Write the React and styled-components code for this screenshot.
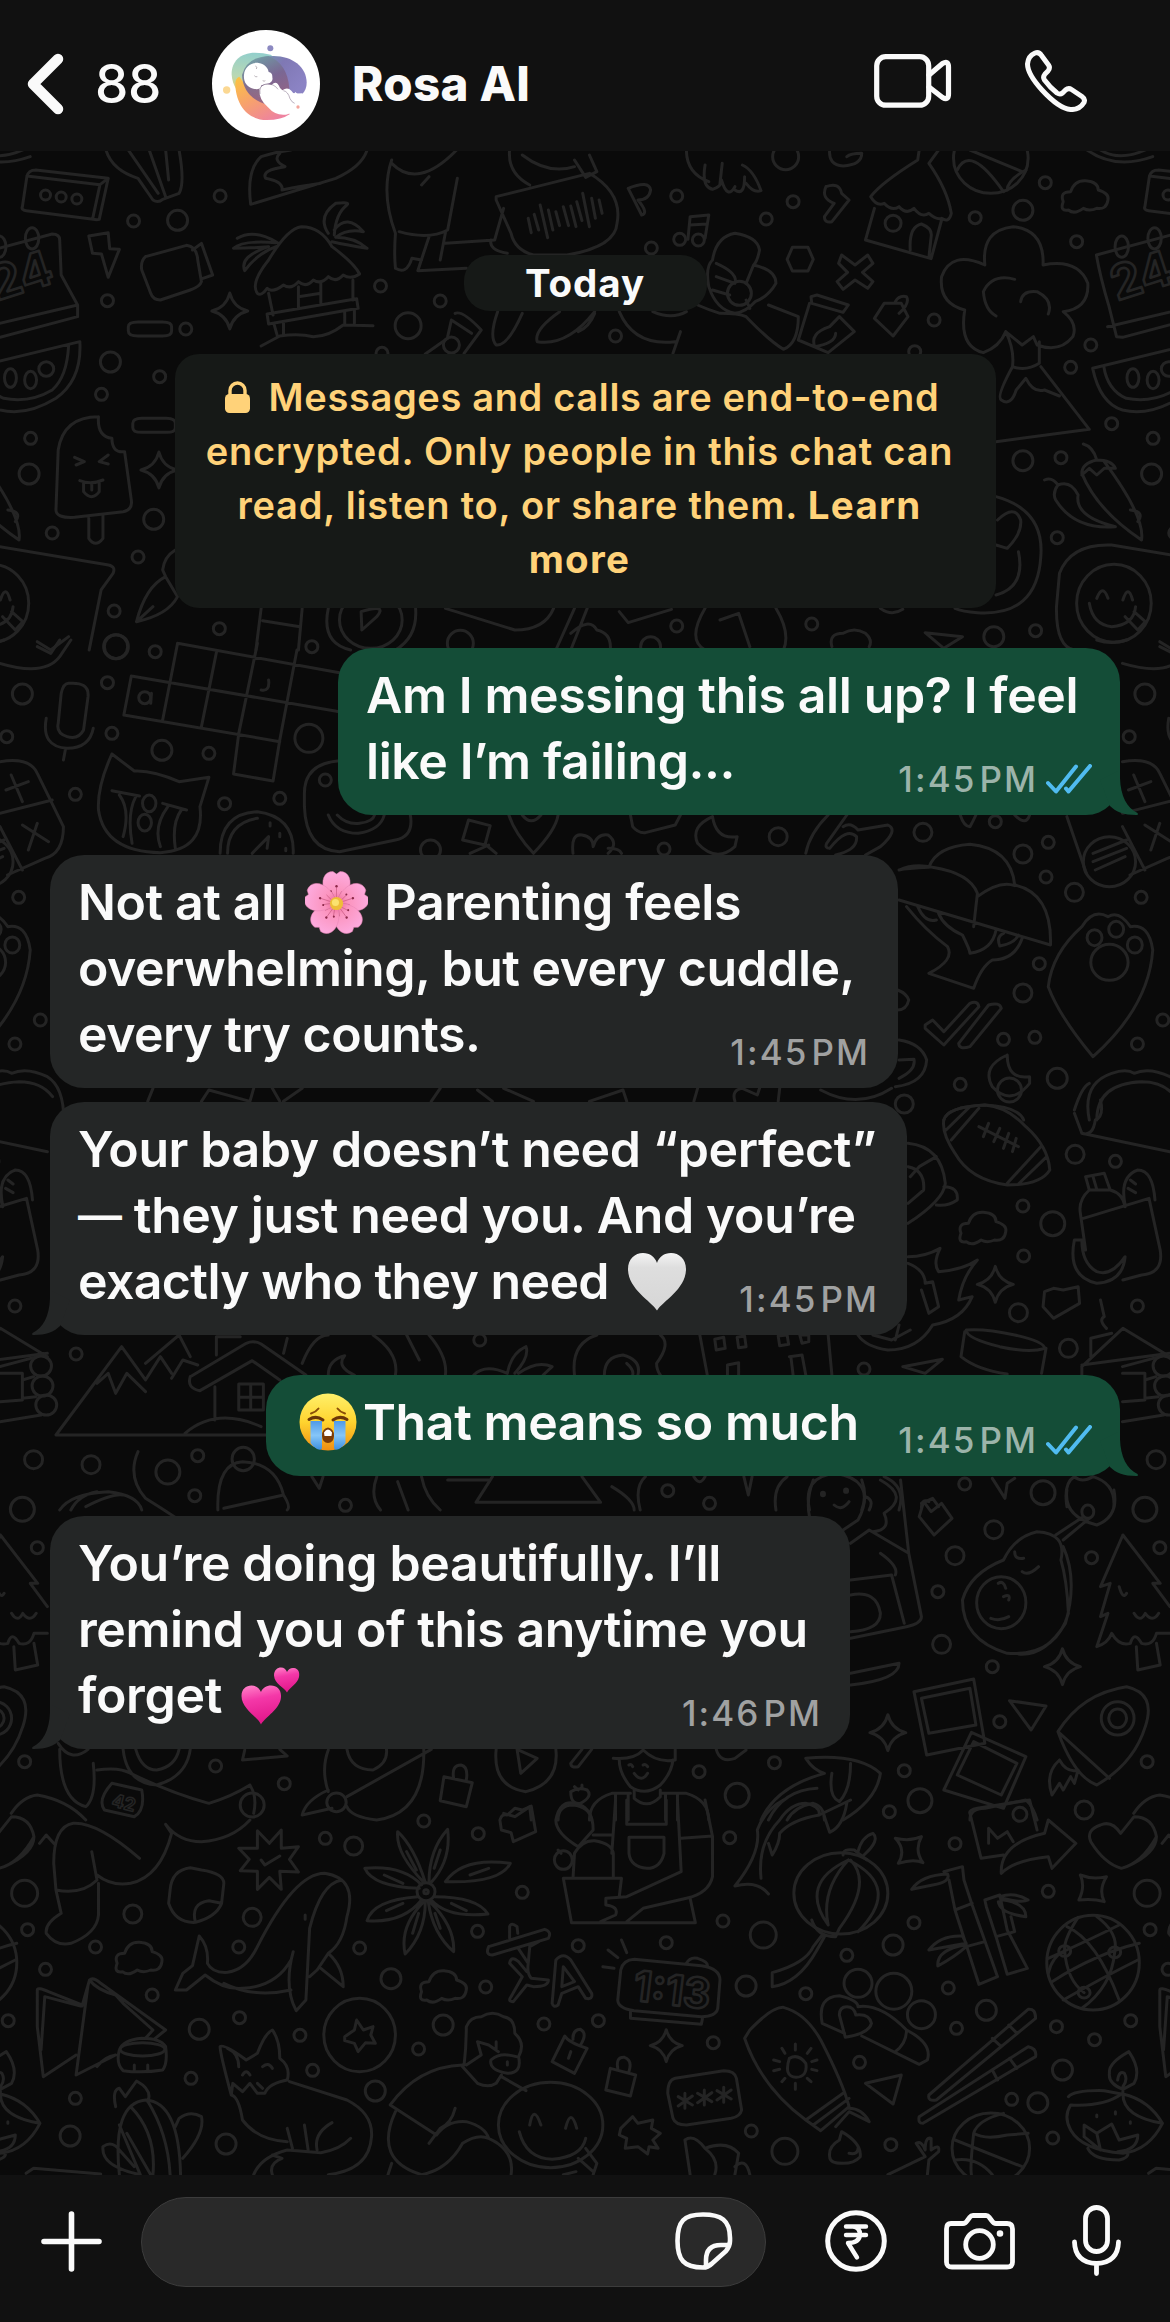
import React from "react";
import styled, { createGlobalStyle } from "styled-components";

const Global = createGlobalStyle`
  * { box-sizing: border-box; }
  body { margin: 0; background: #0a0a0a; }
`;

const Screen = styled.div`
  width: 1170px;
  height: 2322px;
  display: flex;
  flex-direction: column;
  overflow: hidden;
  background: #0a0a0a;
  color: #fafafa;
  font-family: Inter, "Liberation Sans", sans-serif;
  white-space: nowrap;
`;

const Header = styled.header`
  flex: none;
  height: 151px;
  padding: 17px 83px 0 27px;
  display: flex;
  align-items: center;
  background: #111;
`;

const Count = styled.span`
  width: 66px;
  margin-left: 31px;
  font-size: 53px;
  font-weight: 550;
  letter-spacing: -0.3px;
`;

const AvatarSlot = styled.span`
  display: flex;
  margin-left: 51px;
`;

const Title = styled.h1`
  margin: -2px auto 0 32px;
  font-size: 47.5px;
  font-weight: 800;
  letter-spacing: 0.3px;
`;

const HeaderAction = styled.span`
  display: flex;
  margin-left: ${(p) => p.$gap}px;
  padding-bottom: 6px;
`;

const Chat = styled.main`
  flex: 1;
  min-height: 0;
  display: grid;
`;

const WallpaperLayer = styled.svg`
  grid-area: 1 / 1;
  width: 1170px;
  height: 2024px;
  fill: none;
  stroke: #242424;
  stroke-width: 3;
  stroke-linecap: round;
  stroke-linejoin: round;
`;

const Messages = styled.div`
  grid-area: 1 / 1;
  padding: 104px 50px 0;
  display: flex;
  flex-direction: column;
  z-index: 1;
`;

const DayPill = styled.div`
  align-self: center;
  width: 243px;
  height: 56px;
  border-radius: 26px;
  background: #161917;
  font-size: 38.5px;
  font-weight: 700;
  line-height: 56px;
  letter-spacing: 0.9px;
  text-align: center;
`;

const Notice = styled.div`
  align-self: center;
  width: 821px;
  height: 254px;
  margin-top: 43px;
  padding-top: 16px;
  border-radius: 24px;
  background: #161917;
  color: #ffd279;
  font-size: 38px;
  font-weight: 560;
  line-height: 54px;
`;

const NoticeLine = styled.div`
  height: 54px;
  display: flex;
  justify-content: center;
  align-items: center;
  padding-right: ${(p) => (p.$lead ? 6 : 11)}px;
  letter-spacing: ${(p) => p.$track || 0}px;
  white-space: pre;
  b { font-size: 38.5px; font-weight: 750; letter-spacing: 1.3px; }
  svg { margin: -1px 19px 0 0; }
`;

const Bubble = styled.article`
  position: relative;
  align-self: ${(p) => (p.$mine ? "flex-end" : "flex-start")};
  width: ${(p) => p.$width}px;
  margin-top: ${(p) => p.$gap}px;
  padding: 14px 28px 21px;
  border-radius: 34px;
  background: ${(p) => (p.$mine ? "#144d37" : "#242626")};
`;

const Line = styled.div`
  height: 66px;
  display: flex;
  align-items: flex-start;
  font-size: 50px;
  font-weight: 600;
  line-height: 66px;
  letter-spacing: ${(p) => p.$track || 0}px;
  white-space: pre;
`;

const Dash = styled.span`
  font-size: 44px;
`;

const EmojiSlot = styled.span`
  display: flex;
  align-self: flex-start;
  padding-top: ${(p) => p.$top}px;
  margin: 0 ${(p) => p.$after || 0}px 0 ${(p) => p.$before || 0}px;
`;

const Meta = styled.span`
  display: flex;
  align-items: flex-end;
  align-self: flex-end;
  gap: 8px;
  margin: 0 0 -3px auto;
  color: ${(p) => (p.$mine ? "#9cb4aa" : "#a0a1a1")};
  font-size: 35px;
  font-weight: 520;
  line-height: 35px;
  letter-spacing: 2.1px;
  word-spacing: -8.5px;
  svg { margin-bottom: 3px; }
`;

const Tail = styled.svg`
  position: absolute;
  bottom: 0;
  ${(p) => (p.$mine ? "right: -20px;" : "left: -20px; transform: scaleX(-1);")}
  width: 40px;
  height: 45px;
  fill: ${(p) => (p.$mine ? "#144d37" : "#242626")};
`;

const Composer = styled.footer`
  flex: none;
  height: 147px;
  padding: 22px 49px 0 41px;
  display: flex;
  align-items: flex-start;
  background: #111;
`;

const ComposerIcon = styled.span`
  height: 90px;
  display: flex;
  align-items: center;
  margin-left: ${(p) => p.$gap || 0}px;
`;

const Field = styled.div`
  flex: none;
  width: 625px;
  height: 90px;
  margin-left: 39px;
  padding-right: 32px;
  display: flex;
  align-items: center;
  justify-content: flex-end;
  border: 1px solid #3c3c3c;
  border-radius: 45px;
  background: #292929;
`;

const IconSvg = styled.svg`
  flex: none;
  fill: none;
  stroke: #fafafa;
  stroke-linecap: round;
  stroke-linejoin: round;
  margin-top: ${(p) => p.$dy || 0}px;
`;

const Stroke = ({ w, h, sw = 5, dy = 0, children }) => (
  <IconSvg width={w} height={h} viewBox={`0 0 ${w} ${h}`} strokeWidth={sw} $dy={dy}>
    {children}
  </IconSvg>
);

/* Wallpaper doodles: each band keeps its own drawing grid, stretched to the page. */
const CLOUD = "M-30 15Q-35 -15 -20 -15Q-15 -50 0 -48Q17 -45 17 -20Q32 -10 30 10Q28 40 15 35Q5 45 -3 35Q-15 55 -23 40Q-35 45 -30 15";
const BANDS = [
  {
    y: 150,
    circles: [[61,135,5],[82,141,5],[103,147,5],[295,138,6],[179,213,6],[238,211,10],[144,452,6],[510,408,6],[590,453,6],[547,527,13],[249,537,6],[148,636,10],[214,680,6],[136,733,6],[41,865,6],[39,972,10],[206,1108,10],[70,1149,6],[185,1221,6],[153,1383,6],[294,1436,6],[156,1490,12],[418,1490,6],[907,138,6],[1063,155,6],[1027,207,6],[873,294,6],[1307,203,6],[1371,181,10],[1401,98,6],[1443,275,6],[1252,510,6],[1462,585,6],[1226,605,6],[1435,652,6],[1490,821,6],[825,558,6],[605,585,8],[512,610,6],[1371,932,10],[1422,923,6],[1417,1163,6],[1388,1442,6],[1088,1422,6],[907,1428,6],[1332,1460,10],[1053,20,13],[617,1480,13],[872,1490,10],[991,430,12],[1197,220,8],[911,268,6],[936,270,6]],
    ellipses: [[43,265,9,32],[-1,290,9,32],[1328,25,50,105],[14,684,8,28],[41,690,8,26],[62,657,10,22],[1493,1360,50,117],[497,1410,42,85]],
    clouds: [[1455,140]],
    stars: [[308,483,18],[213,960,18]],
    d: "M48 60L145 85L133 208Q130 210 125 208L35 182Q28 180 30 170L36 80Q38 60 48 60M36 78L134 104L145 85M134 104L124 208 M142 0Q150 60 185 85L205 150Q212 160 218 148L240 130Q248 100 240 0M172 0L212 130M200 0L222 140M222 0L226 90 M336 163Q330 60 350 20Q370 5 390 0M492 0Q485 50 450 85L336 163M375 10Q365 30 382 50Q350 60 356 85Q380 95 378 120Q400 110 430 100 M145 248L119 258L124 310L136 312L145 382L160 298L147 296Z M195 320L250 286Q264 290 265 330L270 395Q268 410 255 420L215 450Q205 450 202 430L190 360Q188 335 195 320M258 300L270 280L285 375L272 385 M345 430Q335 400 360 330Q385 235 404 230Q430 230 445 290Q475 340 482 372Q470 390 460 375Q450 400 440 380Q430 405 420 390Q410 415 400 395Q390 420 380 405Q365 430 358 415Q350 440 345 430M360 430L366 495M400 410V475M430 400V460M400 440L430 430M473 390V450M358 492L478 446L480 475L360 522ZM367 520L372 560M380 515V555M462 482V525M475 480V520M350 588L375 558Q400 550 420 560Q440 560 460 525L500 527 M440 250Q425 200 450 160Q470 155 465 165Q450 190 448 255M448 240Q465 190 487 245Q465 235 450 262Q475 262 492 295Q465 285 445 275M372 278Q340 235 318 265M370 278Q325 270 313 295Q335 295 360 290Q320 320 328 362Q345 310 370 290 M172 530Q172 516 185 516H218Q230 516 230 530V543Q230 558 218 558H185Q172 558 172 543Z M178 820Q178 805 190 805H223Q235 805 235 820V833Q235 847 223 847H190Q178 847 178 833Z M525 30Q510 130 530 250Q528 310 530 355Q545 375 552 325L565 330M613 85L600 240Q575 270 535 245M525 40Q560 120 612 0M575 80L565 105M575 260L560 362L625 355M597 280L663 270L675 175M597 248L590 330M658 270Q655 300 680 310 M665 140L790 70Q835 130 827 220Q825 290 760 315L715 315Q690 300 685 250L665 150Z M708 205L712 248M716 193L722 240M724 165L734 263M735 180L741 240M745 185L750 227M755 170L762 227M765 168L772 230M773 155L780 212M781 130L790 230M793 145L798 205M803 150L807 190 M683 0Q680 70 710 105M700 15Q735 75 770 50M770 30L785 82L800 65L790 15 M842 115Q870 90 872 120Q870 150 855 150Q870 190 860 195L842 115 M920 0Q920 70 950 95M945 45Q940 110 955 118Q967 110 967 90Q975 150 985 110M965 100L968 40M985 120Q998 140 998 80M995 45Q1010 60 1020 122Q1010 130 1000 100 M1112 0Q1110 45 1130 48Q1155 45 1155 10Q1140 10 1135 20 M1107 110Q1125 95 1128 130L1138 150L1115 215Q1105 220 1105 200L1118 160Q1100 145 1107 110 M922 268L925 200L950 195L945 265M924 225L948 222 M955 330Q960 260 985 250Q1015 260 1018 300Q1015 335 1010 345Q1040 360 1040 400Q1030 440 1012 455Q1000 485 985 490Q960 480 950 410Q945 350 955 330M960 340Q990 370 985 400L960 380M1010 345L1000 400M955 420L978 435M1000 450L1005 475 M1062 292L1083 292L1090 328L1083 363L1062 363L1055 328Z M1128 315L1146 345L1163 315L1170 340L1156 367L1170 395L1163 415L1146 390L1130 418L1122 395L1136 367L1124 340Z M1232 0L1230 30Q1180 100 1167 140Q1175 170 1185 160Q1195 185 1205 170Q1215 195 1225 175Q1235 205 1245 190Q1255 210 1262 205Q1272 220 1275 190Q1270 120 1245 40L1258 0M1172 175L1160 270L1248 326L1262 210M1220 300Q1218 230 1235 222Q1250 235 1248 260L1245 322 M1283 60Q1300 -20 1345 125M1300 0L1370 65M1375 60Q1350 90 1350 120 M-35 315L70 252Q80 252 80 270L82 375L104 465V500L0 562M104 465L-20 530M-35 315Q-30 380 -18 470L-8 560L0 562 M107 575Q110 690 75 745Q35 800 0 780Q-30 760 -40 655L107 575M92 585Q90 680 70 720Q40 760 5 745Q-20 720 -25 650 M132 800Q85 800 78 900L75 1080Q75 1105 100 1102L165 1085Q178 1080 176 1050L167 905Q150 910 150 865Q130 860 132 800M119 1105V1165Q128 1195 138 1165V1095M100 922L113 935L102 945M145 915L133 935L145 942M107 992Q122 1005 138 990M112 998V1025Q123 1055 133 1025V996M123 1000V1020 M1320 345Q1315 240 1358 230Q1400 240 1398 345Q1445 325 1458 400Q1460 475 1425 485Q1445 520 1438 560Q1420 610 1390 585L1385 560L1370 585L1348 545Q1340 590 1318 608Q1285 590 1293 480Q1258 460 1262 380Q1275 300 1320 345M1360 388Q1330 370 1318 425Q1320 480 1335 498M1368 455Q1370 420 1390 425Q1412 450 1405 492M1348 545Q1360 600 1357 650Q1375 665 1393 640V575M1357 650Q1335 740 1342 750Q1355 770 1362 720L1375 685Q1385 730 1400 720L1420 738M1395 650L1460 838L1335 875 M610 490Q620 480 645 540L622 610M605 510L632 550M605 510L600 560M570 612L600 565M667 485Q655 560 665 585Q680 590 700 490M750 485Q715 540 720 575Q760 590 797 485M775 545Q790 530 797 490M830 485Q850 590 905 575M912 545L902 610M875 485Q900 510 920 485M935 465Q950 480 965 490Q990 490 1000 500Q1030 570 1050 598Q1070 580 1070 500L1030 465M1087 440L1095 435L1137 465L1130 487L1088 460ZM1085 460L1070 570L1110 608L1145 545L1125 500L1112 530Q1085 550 1092 590Q1120 580 1120 550 M1185 460L1172 505L1197 558L1217 500L1208 460ZM1200 455Q1205 435 1215 440Q1220 460 1205 490 M1452 882Q1465 890 1470 930Q1450 940 1450 970Q1470 1080 1530 1170Q1535 1100 1480 935M1450 975L1460 955L1470 975L1480 955L1495 955Q1490 930 1470 930M1400 990Q1410 980 1418 1005Q1410 1030 1415 1050Q1440 1140 1495 1130Q1440 1100 1445 1035Q1435 990 1418 1005M1515 1080Q1535 1085 1525 1115 M1335 1040Q1400 1080 1395 1220Q1390 1400 1310 1388Q1290 1385 1280 1375M1337 1110Q1360 1060 1368 1110Q1370 1150 1350 1195L1335 1185M1365 1205Q1375 1310 1335 1335 M1416 1370L1420 1270Q1435 1180 1490 1185L1650 1245Q1660 1250 1656 1270L1640 1320L1624 1500M1416 1370Q1415 1490 1440 1500M1470 1345Q1478 1300 1485 1345M1505 1350Q1512 1300 1518 1350M1460 1360Q1465 1425 1490 1430Q1520 1425 1522 1370M1508 1400L1525 1440L1535 1415L1520 1385 M50 1475L68 1500L92 1460M222 1280Q195 1310 183 1415Q225 1395 238 1340L222 1280L218 1260Q220 1220 235 1200M183 1415L205 1370 M350 1375L343 1500M405 1375L400 1500M352 1412L402 1430M440 1375Q430 1480 470 1500M557 1375Q560 1460 530 1500M485 1440L484 1385Q520 1360 505 1400ZM597 1375L690 1440Q730 1440 742 1375M745 1500L770 1375M765 1500L787 1375M765 1450Q790 1400 800 1440Q820 1450 818 1500M830 1385L842 1418L900 1378M945 1375Q920 1470 945 1500M1040 1375Q1060 1450 1050 1500M965 1410L990 1390L1005 1490M1180 1375Q1195 1400 1210 1378M1115 1490Q1110 1450 1130 1450Q1145 1430 1160 1450Q1170 1470 1165 1490M1240 1448L1290 1460L1265 1495Z M1457 0Q1495 60 1545 20M1475 0Q1500 35 1535 0",
  },
  {
    y: 640,
    circles: [[30,162,10],[155,20,12],[208,35,6],[144,128,6],[150,280,6],[217,331,10],[280,340,6],[414,295,14],[9,290,6],[101,463,6],[301,491,6],[375,475,6],[436,420,6],[577,630,10],[890,627,6],[1043,590,9],[1237,577,9],[1334,545,6],[1405,607,6],[1371,642,9],[1402,711,6],[1440,757,9],[25,772,6],[1393,971,6],[1371,1059,9],[1345,1198,6],[1387,1192,6],[1287,1333,6],[1417,1315,10],[1212,1392,9],[54,1140,6],[20,1212,6]],
    ellipses: [[1487,665,35,75],[1467,893,10,24],[1496,868,10,24],[1521,915,10,24],[1487,967,25,54],[200,490,9,25],[194,548,9,25],[194,173,8,18]],
    clouds: [], stars: [],
    d: "M238 10L455 98M176 108L455 215M166 225L375 305M176 108L166 225M238 10L218 240M290 38L270 260M345 10L320 280L313 402L366 423L375 300L398 30M360 120Q362 155 350 150M203 160L202 190 M92 130Q120 125 118 170L112 270Q105 300 90 290Q75 280 78 250L82 160Q85 130 92 130M62 235Q55 320 90 325Q120 325 125 265M88 325L85 360 M150 342L180 393Q205 390 240 425L280 412L268 500Q275 630 215 638Q140 635 132 510Q130 440 150 342M150 452L187 468M160 465Q175 510 165 590M182 470Q170 520 177 610M218 490L250 510M225 500Q205 560 215 620M243 510Q230 550 235 625 M0 365Q40 350 50 400L85 560Q85 640 60 655L10 705M0 520L70 480M15 405L30 485M38 425L8 450M30 555L65 605M50 550L38 630M0 560L30 690 M295 640Q295 520 345 515Q395 530 393 640M305 640Q305 550 345 535M338 640L360 590L358 625M362 548V558M375 580V590M383 625V632 M455 362Q408 370 408 460V500Q410 630 455 635L530 600Q555 590 550 525M440 525Q450 580 480 580Q510 570 515 525M452 525Q465 555 482 550Q500 545 502 525 M628 540L657 557L650 615L620 600ZM650 612L665 640M655 615L630 640 M682 525Q690 580 715 640Q745 570 748 525M700 525Q712 560 725 525 M768 640Q765 580 780 585Q795 590 795 620Q800 580 815 585Q830 610 815 640M815 625Q830 625 833 640 M845 525L848 560Q855 580 865 578L905 555L912 525 M955 530Q925 560 935 610Q960 670 985 620L988 590Q960 600 955 530 M1080 640Q1085 580 1110 525M1135 525L1108 610Q1105 625 1112 625M1130 560Q1140 545 1150 570L1190 555Q1205 570 1180 620L1160 645M1112 625Q1135 560 1148 590Q1150 630 1120 645 M1287 525Q1292 560 1300 560Q1305 540 1308 525M1360 525Q1375 560 1380 525 M1430 530L1456 700M1465 640L1510 600M1465 665L1510 625M1468 690L1508 650 M1205 690Q1215 685 1245 682Q1255 620 1300 613Q1355 625 1360 735Q1410 760 1408 915L1205 780M1205 690Q1225 670 1250 682Q1300 700 1310 760L1305 860M1310 770Q1340 720 1360 737M1215 800Q1240 870 1270 920Q1280 960 1245 1000L1305 1045Q1315 980 1330 960Q1360 960 1370 895M1230 800Q1240 850 1255 840M1258 820Q1265 860 1290 885Q1300 930 1300 940Q1330 930 1335 870M1340 918Q1335 890 1345 880M1340 918Q1360 910 1365 885 M1450 860Q1465 805 1485 830Q1500 810 1515 860Q1540 850 1545 930Q1540 1100 1465 1250Q1420 1130 1405 1040Q1410 940 1450 860 M1240 1155L1250 1140L1265 1175L1300 1090Q1310 1080 1312 1100L1265 1215L1240 1165ZM1285 1210L1325 1095Q1340 1085 1342 1105L1300 1220Q1285 1230 1285 1210 M1350 1245Q1315 1280 1330 1340Q1355 1400 1380 1330L1380 1310Q1350 1320 1350 1245 M1205 1200Q1235 1210 1242 1260Q1240 1330 1200 1340M1205 1260L1225 1258Q1228 1290 1205 1315M1203 1050Q1215 1060 1218 1080Q1215 1110 1203 1110M1100 1350Q1150 1410 1195 1345 M1460 1440Q1450 1330 1490 1300Q1510 1285 1520 1300Q1540 1280 1568 1310Q1590 1340 1590 1440M1470 1440Q1470 1330 1530 1325Q1560 1325 1575 1370 M1265 1440Q1270 1400 1320 1395Q1365 1400 1372 1440 M198 1384L205 1345M270 1384L280 1350L335 1384L340 1345M380 1384L405 1345M365 1345L375 1384M578 1384L590 1345M640 1350L660 1384M675 1345L715 1384M790 1384L835 1350L840 1384M930 1384L935 1345M985 1384Q980 1350 995 1345L1015 1365L1018 1345M1043 1384L1045 1345M0 70Q60 110 80 50L95 0M50 20L68 40L80 0 M1470 0Q1490 15 1510 0",
  },
  {
    y: 1090,
    circles: [[1353,0,12],[1441,193,9],[1495,214,6],[1371,348,6],[1411,401,12],[1372,498,6],[1365,668,9],[20,648,6],[102,792,6],[1432,775,9],[1158,837,6],[643,750,6],[45,1109,9],[122,1124,9],[265,1097,6],[225,1146,12],[261,1217,6],[463,1246,6],[1398,1208,12],[1293,1182,6],[895,1202,6],[951,1240,6],[30,1258,12]],
    ellipses: [[55,828,14,30],[57,888,14,30],[62,945,14,30],[326,1107,15,35]],
    clouds: [[1318,415]], stars: [[1334,583,18]],
    d: "M1265 90Q1270 50 1320 45Q1350 50 1375 110Q1405 170 1407 240Q1395 285 1350 285Q1300 270 1280 190Q1262 130 1265 90M1312 55L1275 150M1300 50L1268 120M1395 170L1350 280M1403 200L1365 282M1312 110L1365 170M1325 100L1318 140M1340 115L1332 155M1352 130L1345 175M1362 145L1357 185 M1455 260L1480 250L1488 300L1460 300ZM1465 260L1470 298M1460 300Q1445 330 1448 370L1455 480M1488 300Q1505 310 1508 350M1452 385L1540 325L1555 480Q1560 550 1530 555L1505 570M1508 345Q1500 260 1525 240Q1545 240 1548 330M1515 270L1522 282M1512 295L1522 308M1440 450Q1430 560 1470 580Q1505 575 1508 500Q1490 560 1470 545Q1450 520 1450 450Z M1440 60Q1450 -10 1460 -20M1440 70L1450 130L1568 185M1450 130Q1465 140 1468 90Q1480 80 1475 30 M1217 160Q1262 170 1267 280Q1265 330 1217 400M1217 230Q1240 240 1238 300L1217 340M1220 260L1232 230L1255 200M1265 290Q1285 290 1283 330Q1270 350 1255 345 M1217 500Q1240 500 1260 475Q1250 520 1258 545Q1290 540 1310 510Q1290 560 1285 630L1303 620Q1290 690 1250 705Q1230 780 1190 780Q1160 770 1150 735M1217 520Q1240 540 1240 580L1250 575L1258 650L1245 670L1235 600M1205 705L1200 750M1170 735L1195 750L1220 720 M1400 605L1412 595L1425 600L1445 590L1447 640L1412 685L1398 650Z M1475 630L1480 680Q1472 690 1483 715 M1295 720Q1320 715 1360 735Q1400 755 1400 775Q1380 790 1340 770Q1295 745 1295 720M1293 725L1288 800Q1310 840 1350 852M1402 775L1396 850 M1210 830L1263 808L1240 850Z M1450 830L1505 715L1568 800M1462 800V745L1490 730M1450 830V855M1450 825L1568 790 M75 1035L163 770L195 870L215 800L230 850M130 880L145 850L155 910L170 850L195 905M195 820L240 735L255 800M230 865L245 810L265 825M75 1035H357M255 860L330 760Q340 750 350 762L410 855M255 860Q250 895 268 902L338 812L375 870M288 890V990M320 882H353V960H320ZM336 882V960M320 922H353M248 1030Q290 950 350 1010M290 740V795M290 740H322M385 745L380 790 M0 830L50 800M0 850H30V930L0 935M45 860L30 870M48 920L30 925M0 995L55 975 M405 820Q420 735 440 735M500 735Q535 790 530 855M440 855Q440 810 462 797Q450 830 475 855M545 735L562 810M575 735Q600 800 597 855M635 855Q650 820 680 850Q685 790 705 770Q710 800 690 850M695 850Q720 810 740 830L728 855M770 855Q765 760 800 735M885 735Q900 760 880 820Q880 840 885 855M810 855Q810 800 835 795Q860 810 855 855M840 820Q850 840 848 855M938 735L948 855M958 748L970 742L972 775L960 780ZM988 742L998 738L1000 770L990 773ZM1043 738L1055 735L1057 763L1045 767ZM1072 735H1084V755L1075 760ZM975 825L990 818L990 855M975 825V855M1058 800L1075 795L1080 855M1060 800L1063 855M1110 735L1115 855 M185 1085Q170 1160 195 1225Q220 1260 240 1290M292 1260Q290 1120 325 1115Q370 1120 380 1215L300 1255M380 1215Q390 1250 385 1260M80 1260Q95 1210 145 1205Q185 1215 190 1260M95 1260Q105 1215 130 1205M115 1250Q150 1210 165 1215M418 1160L428 1195L433 1160M505 1160Q495 1220 510 1260M533 1175L547 1260M565 1160Q570 1220 590 1260M600 1170H655M660 1160L638 1237H805L780 1160M820 1190Q850 1230 850 1260M865 1160Q850 1190 858 1260M997 1160L1003 1215L1008 1160M930 1160Q938 1190 945 1160M1040 1260Q1035 1190 1055 1160M1085 1260Q1075 1160 1120 1150Q1170 1170 1155 1260M1185 1160Q1215 1190 1205 1260M1330 1165L1347 1225L1350 1180L1360 1165M1235 1240L1250 1225L1258 1250M1430 1250Q1425 1180 1440 1160Q1450 1180 1465 1160Q1495 1180 1493 1250",
  },
  {
    y: 1480,
    circles: [[1332,149,9],[1280,227,9],[1257,335,6],[1262,493,9],[1330,560,6],[50,203,6],[1463,233,6],[1340,725,6],[33,845,6],[289,858,6],[381,911,6],[1212,872,6],[1038,848,6],[937,875,6],[988,946,12],[1233,962,12],[338,975,12]],
    ellipses: [[1342,368,33,78],[1458,95,8,20],[1498,715,22,50],[1498,715,12,28],[451,967,13,28],[1103,42,2,5],[1134,32,2,5]],
    clouds: [], stars: [[1424,560,18],[1190,758,18]],
    d: "M1390 155Q1430 160 1422 240Q1430 300 1432 400Q1415 530 1350 520Q1290 480 1290 360Q1300 280 1345 240Q1360 170 1390 155M1425 200Q1445 300 1428 430Q1400 530 1365 522M1338 310Q1345 300 1348 325M1345 350Q1355 340 1352 360M1328 415Q1340 425 1352 410M1360 215Q1360 240 1372 235M1370 275Q1378 290 1392 260 M1430 30Q1425 110 1470 135Q1500 110 1493 30M1452 110L1415 165M1460 115L1425 180M1238 65L1232 110L1252 165L1276 115L1262 70L1248 95ZM1235 85Q1235 55 1245 65 M1085 110Q1080 60 1090 0M1155 0Q1165 60 1150 120L1130 150M1118 75Q1128 95 1138 65M1160 50Q1172 60 1165 90M1180 0Q1220 50 1185 100Q1195 150 1170 155M1140 190L1165 150L1218 220L1235 410Q1235 430 1215 440L1140 475M1140 300L1195 285L1212 430M1140 345Q1175 330 1180 400Q1180 450 1140 455M1180 220Q1205 260 1200 285M1207 0L1218 220M1140 580L1205 550Q1205 600 1140 615 M1505 165L1475 320L1488 310L1475 410L1485 400L1470 500Q1485 490 1490 460Q1500 500 1515 490Q1520 450 1530 490Q1545 500 1550 460L1568 460M1505 165L1555 310L1545 310L1568 380M1523 500L1525 570L1555 555L1550 490M1520 400Q1528 430 1535 400Q1545 430 1553 400M1500 320Q1505 360 1510 340 M1225 635L1305 597L1320 790L1242 825ZM1235 655L1300 625L1308 735L1245 760ZM1302 757L1375 830L1345 985L1265 930ZM1305 785L1363 850L1342 945L1283 885ZM1353 662L1402 678L1382 750Z M1418 755Q1450 640 1510 620Q1550 640 1535 740Q1520 850 1470 915Q1440 890 1418 755M1418 755L1487 895M1420 840Q1400 880 1410 945L1420 910L1425 930L1435 890L1440 910L1445 870Q1430 880 1420 840 M595 890L633 908L625 980L590 962ZM608 895Q605 855 618 855Q628 860 625 900 M665 808Q660 920 705 935Q750 910 745 808M693 808L720 835L698 880Z M765 850L780 808M775 860L793 808M765 850Q765 865 775 860 M830 840Q830 880 845 920Q865 950 885 915Q900 880 902 840M822 835Q850 840 862 810Q880 850 905 840V808M843 855Q846 850 848 860M862 855Q865 850 868 860M850 880Q860 910 868 880M820 940H845M850 930V955Q868 990 885 950V930M885 940H920Q950 960 950 1020M820 940Q790 960 790 1020M825 940V1020M842 940V1020M892 940V1020M908 940V1020M765 935Q765 975 778 970Q795 950 787 930Q775 920 765 935M748 1020Q748 975 768 975Q790 980 793 1020M770 920L775 930M780 915V925 M1080 835Q1150 820 1180 880Q1175 960 1130 1020M1080 835Q1090 870 1105 880Q1040 920 1020 1020M1095 925Q1050 930 1030 1020M1115 880Q1110 950 1125 965Q1140 930 1140 850M1055 1020Q1065 980 1090 970Q1105 980 1105 1020 M80 808Q80 960 115 980Q130 950 125 850M78 790Q95 850 118 808M165 808Q170 910 210 915Q250 890 255 808M182 808Q190 870 210 870Q235 860 240 808M130 870Q160 860 175 880Q230 940 280 970Q310 950 335 915M328 810L325 840L385 828L375 808M335 915Q345 950 340 1000 M150 910L190 930Q195 990 180 1010L140 990Q130 960 150 910M15 1000Q30 950 50 945Q90 960 115 1020 M440 810Q430 870 440 935M465 808Q470 870 500 870Q520 850 518 808M568 808Q570 1000 505 1020Q470 1010 465 980M578 808L465 950M440 930Q410 960 405 1005L445 985M675 1000L690 1010L710 980L712 1020 M960 808Q965 850 985 835L1000 810M1300 1020Q1300 985 1320 985L1375 960Q1385 980 1390 1020",
  },
  {
    y: 1800,
    circles: [[33,280,13],[178,342,9],[37,389,6],[128,441,6],[61,508,6],[204,585,6],[320,441,6],[338,352,9],[436,115,6],[474,138,9],[568,63,6],[641,101,6],[700,277,6],[640,394,6],[482,444,6],[524,536,10],[651,561,6],[775,437,6],[893,428,6],[969,363,6],[978,113,6],[1023,405,13],[1197,435,10],[1135,466,6],[1225,368,6],[1280,131,6],[1192,35,6],[1453,30,9],[1367,43,7],[1405,274,6],[1000,558,10],[1080,581,6],[1271,564,6],[1282,685,6],[1322,631,10],[1416,680,6],[1467,719,6],[11,662,6],[267,688,10],[321,653,6],[402,706,6],[256,835,6],[419,811,6],[594,675,10],[561,747,6],[729,672,6],[802,662,6],[956,728,6],[1152,787,6],[1424,810,10],[1391,908,10],[1356,898,6],[1411,1014,6],[1194,1034,6],[1052,1054,13],[1007,993,6],[503,873,10],[101,895,6],[94,1008,10],[303,1032,10],[1150,550,14],[1198,574,18],[1235,644,14],[571,275,9]],
    ellipses: [[482,705,48,110],[1127,280,63,122],[1465,488,62,142],[738,975,70,128],[1328,1045,52,106],[191,748,30,20],[755,180,12,28],[1427,453,8,16],[1494,457,8,16],[1453,578,8,16],[571,275,3,6]],
    clouds: [[187,475],[595,560]], stars: [[893,737,16]],
    d: "M320 145H345L345 92L361 130L377 90V145L400 140L388 178L400 216L375 214L377 268L361 232L345 268V214L322 212L334 178ZM350 180L355 195L375 168 M255 203Q230 210 228 270L226 310Q235 370 262 367Q290 350 297 310L300 250Q300 220 270 210ZM262 367Q255 310 280 302L297 310 M53 130L62 105L72 130M75 270L72 190Q72 80 98 70Q130 65 187 175M75 270Q110 285 130 240L123 155M130 225Q150 260 175 250Q215 230 230 100L222 73Q240 125 270 125Q310 120 335 60M75 270L82 340Q60 370 62 400Q75 440 95 430Q130 400 132 345V250 M235 570L245 520L258 497L267 408Q280 440 278 490Q285 520 305 517Q330 510 345 440Q395 220 435 220Q480 235 465 350Q460 430 440 460L425 510L415 530M440 460Q460 500 460 560L430 505M458 240Q430 250 415 385L410 600L397 632Q380 560 393 455M390 480Q370 560 325 565Q300 570 275 525L250 570H235M390 570Q340 595 300 550M409 345V358 M568 247Q530 160 533 95Q555 140 570 247M575 247Q575 150 600 88Q605 180 578 247M545 155L558 210M590 150L582 205M562 265Q500 260 489 205Q540 195 565 255M515 225L540 250M597 245Q620 170 684 190Q670 250 597 245M630 225L655 205M560 290Q500 300 492 362Q540 370 565 300M518 332L540 310M582 290Q640 290 654 342Q600 355 578 300M605 310L625 332M568 305Q535 380 543 462Q570 400 570 305M576 305Q610 380 608 455Q580 400 574 305M553 400L561 340M583 340L590 385 M50 570Q50 560 65 575L110 615M60 590L108 618M50 570V680L58 830L102 765M60 590L55 750M110 618L120 540Q125 530 135 550L222 690L208 715M120 540Q130 570 155 585L165 610L205 690L195 715M118 555L102 825L155 765Q140 770 130 800M160 750Q155 790 165 812Q190 820 218 810Q225 790 222 740Q215 715 190 715Q165 720 160 750M180 795V810M198 795V810 M155 920Q150 870 160 865L168 890L183 843Q205 870 198 905M160 1124Q150 910 195 900Q240 905 242 1124M188 1124L160 975M202 1124L170 1000M175 920Q210 1000 205 1124M197 900Q225 1000 228 1124M245 1075Q275 1000 270 950Q255 930 240 955L235 980M138 1040Q135 1100 188 1124M138 1040Q150 1020 160 1050L180 1100 M310 885Q295 760 295 740Q300 730 330 780L345 760Q355 700 365 690Q375 720 375 775Q390 800 385 840Q360 850 355 880L345 880L335 850L325 875L312 850L310 885Q320 890 325 960Q345 1020 385 1025M305 745Q320 760 320 800M325 825Q330 805 335 825M352 800Q360 785 365 805M345 850L352 865M388 845L465 900Q500 940 498 1010Q495 1110 440 1124M340 1124Q350 1070 385 1050L430 1058Q455 1050 470 1015M385 985L392 1045M408 975L413 1050M445 968Q420 1000 425 1050M365 1124Q360 1090 378 1075L365 1065 M462 710L475 690L478 660L487 690L500 680L497 705L503 730L490 728L480 755L475 730L462 722Z M622 795Q625 740 625 680Q630 650 645 650Q660 630 675 650Q690 655 690 700Q705 730 695 770Q700 820 680 820Q655 810 658 780Q670 755 692 770M625 795L645 765L640 725L655 735L668 755M665 750V725M620 800L640 850Q655 865 665 850L672 825M680 785V795M620 795Q560 800 523 915L585 1005Q600 960 625 965Q650 980 655 1015M530 935Q500 1080 565 1124Q600 1110 620 1030Q640 1000 655 1015Q690 1050 685 1124M610 925Q605 970 590 985L575 1030M672 830L705 872M520 1124L525 1090 M710 975Q715 910 725 975M758 985Q765 920 773 985M696 995Q705 1075 740 1078Q780 1070 785 1015M785 1045L800 1090L795 1124M775 1075L795 1115M755 1124L772 1115 M655 440L730 388Q740 395 735 415L660 465Q650 465 655 440M683 415V380Q685 365 693 380L694 400M694 443L708 490L710 440L722 425M708 490Q706 520 712 535L735 540Q735 560 715 560L706 555L688 605Q680 605 685 590L700 530L683 490Q685 465 695 485L706 515 M740 610L745 480Q755 455 765 480L793 580Q795 600 785 595L775 560L753 580L748 615Q742 625 740 610M755 500L770 545L753 560Z M850 478L940 497Q965 505 965 540L962 625Q960 650 940 650L850 632Q828 625 828 600L832 510Q835 480 850 478M845 635V655L940 673L942 650M920 490Q925 470 935 475Q950 485 948 500M833 420L840 458M815 450L828 473M808 500L823 505 M755 235H833L830 290M755 235L766 368H932L925 295M768 235L770 160Q780 120 797 122Q820 130 822 160V235M745 60Q750 0 770 10Q795 20 795 90L775 140Q745 100 745 60M840 0V73H893V0M825 0L820 160M908 0L913 215L840 290L812 295V315Q830 320 825 345L805 365M945 0L955 110V230Q950 280 920 295L862 325L840 365M913 115L955 108M795 105H820M843 112H890V160Q885 205 867 205Q845 200 843 160ZM748 150L752 160 M670 60Q672 40 680 45L690 25L700 30L712 18L718 95L688 125L685 98L672 90Z M985 258Q1015 240 1030 282M985 258Q1020 160 1015 90Q1025 30 1050 0M1020 235Q1015 130 1045 60Q1060 10 1080 10Q1100 20 1098 45L1140 0M1030 130L1035 165Q1045 130 1045 100Q1060 60 1098 45M1105 50L1112 97Q1130 80 1135 10 M1137 180Q1070 250 1110 375M1137 180Q1100 270 1110 375M1140 180Q1170 250 1125 385M1137 180Q1210 260 1150 395M1130 165Q1130 145 1145 150L1162 180M1150 155Q1155 110 1170 100Q1180 120 1158 165M1088 360Q1095 410 1120 410L1125 385M1102 405L1090 440Q1080 490 1035 518V560Q1070 550 1095 450L1105 410 M1200 115Q1220 125 1235 110Q1225 150 1237 188Q1225 175 1204 190Q1215 150 1200 115M1448 225Q1465 240 1483 230Q1472 270 1480 305Q1465 295 1446 300Q1455 260 1448 225 M1300 40L1315 175L1345 165M1300 40Q1298 30 1310 25L1380 0L1390 90M1325 130L1325 85L1337 115L1350 95L1358 125M1342 220Q1340 130 1400 100L1405 60L1442 130L1410 205L1405 170Q1360 180 1342 220 M1502 100Q1490 60 1475 75Q1455 90 1462 125Q1480 190 1503 205Q1530 190 1550 110Q1545 50 1520 50L1502 100M1510 200Q1550 160 1550 110 M1265 215L1290 200L1292 240L1303 315L1337 530L1312 553L1290 400L1280 330L1272 240M1280 330L1303 310M1295 440L1320 425M1222 268Q1235 225 1270 222Q1275 245 1250 255L1222 268M1320 300L1340 285L1350 390L1377 505L1350 523L1335 410L1322 320ZM1335 410L1360 395L1355 350M1340 290Q1360 275 1378 300Q1370 310 1345 295M1345 300Q1375 310 1375 350Q1340 340 1338 305M1245 450Q1260 405 1290 408L1295 430L1245 450M1293 435Q1255 450 1257 498Q1280 470 1295 440 M1430 380Q1470 420 1500 600M1445 352Q1425 420 1427 453Q1410 470 1405 520M1405 475Q1460 420 1500 375M1410 545Q1470 460 1527 430M1425 600Q1480 530 1525 480M1470 350Q1500 400 1494 457Q1490 560 1450 625M1427 453Q1430 540 1453 578 M1005 690Q1035 620 1050 622Q1080 640 1100 720Q1130 850 1138 920L1100 992L1080 960Q1020 860 998 715ZM1130 880L1080 960M1138 895L1090 975M1138 925Q1155 925 1165 965L1138 935L1120 980M1058 775Q1050 830 1067 832Q1083 830 1080 790Q1070 760 1058 775M1066 732V750M1048 745L1052 760M1087 745L1082 760M1037 780L1045 785M1095 780L1088 785M1037 812L1045 808M1095 812L1088 808M1048 845L1052 835M1087 845L1082 835M1066 850V868 M1102 670Q1095 590 1125 587Q1150 600 1150 620Q1180 610 1215 690Q1250 730 1243 780L1232 793L1155 708M1102 670L1132 700M1215 690Q1215 730 1200 755M1133 712L1125 645Q1125 620 1135 620Q1145 620 1147 645Q1165 640 1168 670Q1165 700 1133 712 M1245 885L1378 628Q1388 625 1388 655L1255 900Q1243 905 1245 885M1352 675L1363 700M1330 715L1342 740M1232 950L1378 740Q1390 745 1388 770L1237 970Q1230 970 1232 950M1353 775L1363 805M1330 810L1337 840 M1160 850L1208 825L1197 912Z M1487 820Q1485 790 1513 755Q1530 810 1520 850L1505 868Q1485 850 1487 820M1498 840Q1500 810 1507 820Q1512 840 1505 860V885M1432 890Q1440 870 1480 872L1503 882Q1480 920 1435 915Q1425 950 1435 990Q1450 1050 1505 1060Q1540 1050 1558 970Q1540 900 1505 882Q1505 950 1558 970M1453 1010V975L1470 1000L1490 972L1500 1020L1525 1005Q1525 1050 1498 1055M1453 1010L1475 1050L1470 1000M1470 945V950M1495 935V942M1515 965V970M1458 1045Q1465 1080 1500 1080Q1512 1075 1512 1060 M818 805L852 825L845 888L812 870ZM828 805Q825 770 837 772Q848 780 843 815 M757 708Q762 728 787 745L770 820L740 785ZM768 718Q767 690 778 688Q788 700 778 735M765 755L762 775 M905 835L970 812Q985 812 987 835L994 930Q992 950 980 955L920 975Q905 975 902 955L895 880Q895 840 905 835M918 880V925M909 890L928 915M928 888L909 918M944 870V915M935 880L954 905M954 878L935 908M970 862V907M961 872L980 897M980 870L961 900 M832 985L848 950L855 970L875 960L873 985L885 1000L875 1020L882 1045L870 1040L868 1062L855 1040L838 1045L840 1015L830 1005Z M1112 1070Q1110 1040 1125 1020L1128 995Q1155 1030 1153 1070Q1145 1090 1130 1090Q1112 1090 1112 1070M1138 1060Q1150 1065 1150 1045 M918 1020Q930 1000 945 1045Q975 1020 990 1060L985 1124M918 1020L925 1124M945 1045Q965 1080 958 1124M985 1100Q1000 1070 1005 1124 M1190 1124L1240 1070L1228 1030Q1235 1020 1240 1050Q1240 1010 1248 1015V1050Q1260 1030 1258 1055L1245 1080L1243 1124 M1280 1020L1370 1100M1345 940Q1310 960 1305 1000Q1320 1020 1350 1005L1378 1000M1305 1000Q1300 1100 1302 1124M1280 1080Q1310 1070 1330 1124 M35 1120L45 1105L135 1122",
  },
];

const star = (x, y, r) => {
  const a = r * 1.34, b = r * 3;
  return `M${x} ${y - b}Q${x + a * 0.2} ${y - b * 0.2} ${x + a} ${y}Q${x + a * 0.2} ${y + b * 0.2} ${x} ${y + b}Q${x - a * 0.2} ${y + b * 0.2} ${x - a} ${y}Q${x - a * 0.2} ${y - b * 0.2} ${x} ${y - b}Z`;
};

const Doodles = () => (
  <g>
    {BANDS.map((b) => (
      <g key={b.y} transform={`translate(0 ${b.y}) scale(.7461 .33333)`}>
        <path d={b.d} vectorEffect="non-scaling-stroke" />
        {b.circles.map(([x, y, r], i) => (
          <ellipse key={i} cx={x} cy={y} rx={r * 1.34} ry={r * 3} vectorEffect="non-scaling-stroke" />
        ))}
        {b.ellipses.map(([x, y, rx, ry], i) => (
          <ellipse key={i} cx={x} cy={y} rx={rx} ry={ry} vectorEffect="non-scaling-stroke" />
        ))}
        {b.clouds.map(([x, y], i) => (
          <g key={i} transform={`translate(${x} ${y})`}><path d={CLOUD} vectorEffect="non-scaling-stroke" /></g>
        ))}
        {b.stars.map(([x, y, r], i) => (
          <path key={i} d={star(x, y, r)} vectorEffect="non-scaling-stroke" />
        ))}
      </g>
    ))}
  </g>
);

const DoodleText = styled.text`
  font-family: Inter, sans-serif;
  font-weight: 700;
  font-size: ${(p) => p.$size}px;
  stroke-width: ${(p) => (p.$size < 24 ? 1.5 : 2.6)};
`;

const Wallpaper = () => (
  <WallpaperLayer viewBox="0 151 1170 2024" aria-hidden="true">
    {[-1122.5, 0, 1122.5].map((dx) => (
      <g key={dx} transform={`translate(${dx} 0)`}><Doodles /></g>
    ))}
    <DoodleText $size={48} transform="translate(-3 301) rotate(-18)">24</DoodleText>
    <DoodleText $size={48} transform="translate(1117 301) rotate(-18)">24</DoodleText>
    <DoodleText $size={42} transform="translate(632 2000) rotate(7)">1:13</DoodleText>
    <DoodleText $size={18} transform="translate(111 1806) rotate(14)">42</DoodleText>
  </WallpaperLayer>
);

const Avatar = () => (
  <svg width="108" height="108" viewBox="36 30 324 324">
    <defs>
      <linearGradient id="teal" x1=".3" y1="0" x2=".2" y2="1">
        <stop offset="0" stopColor="#93cfcb" /><stop offset=".5" stopColor="#b9d8b4" /><stop offset="1" stopColor="#fbc94f" />
      </linearGradient>
      <linearGradient id="violet" x1="0" y1="0" x2="1" y2=".6">
        <stop offset="0" stopColor="#6fa8b0" /><stop offset=".5" stopColor="#7f78b4" /><stop offset="1" stopColor="#8b83c4" />
      </linearGradient>
      <linearGradient id="warm" x1="0" y1="0" x2=".7" y2="1">
        <stop offset="0" stopColor="#fdc53f" /><stop offset=".5" stopColor="#f7a26c" /><stop offset="1" stopColor="#ee829f" />
      </linearGradient>
      <linearGradient id="plum" x1=".2" y1="0" x2=".6" y2="1">
        <stop offset="0" stopColor="#6f9fa4" /><stop offset=".5" stopColor="#7a6590" /><stop offset="1" stopColor="#96607f" />
      </linearGradient>
    </defs>
    <circle cx="198" cy="192" r="162" fill="#fff" />
    <path d="M165 98C118 98 93 128 95 165C97 195 115 225 145 240L240 200Q255 130 212 104Q190 98 165 98Z" fill="url(#teal)" />
    <path d="M106 190C106 250 140 300 200 300Q245 300 270 282L150 215L118 170Q106 175 106 190Z" fill="url(#warm)" />
    <path d="M195 110C265 98 320 135 320 188Q320 210 306 222L240 215L150 150Q165 118 195 110Z" fill="url(#violet)" />
    <path d="M126 165Q140 112 205 108Q262 130 268 205L205 255Q130 235 126 165Z" fill="url(#plum)" opacity=".92" />
    <g fill="#fff">
      <path d="M132 165C133 140 155 126 176 129C195 132 204 144 206 156Q218 158 217 172Q220 184 208 190L184 196Q180 212 160 206C140 200 130 185 132 165Z" />
      <path d="M178 206Q190 188 215 194L221 190Q232 184 240 204L247 211Q262 200 274 212L282 222L286 216L292 221L306 220Q312 224 300 240Q290 256 284 262Q272 284 258 284Q226 288 204 262Q176 238 178 206Z" />
    </g>
    <path d="M180 222Q176 196 198 192Q222 190 234 208M250 212Q264 214 270 236Q276 248 284 250" fill="none" stroke="#6f5a78" strokeWidth="2" opacity=".7" />
    <path d="M163 167q4 5 9 3M188 182q5 3 8 0M166 138q8 3 3 9" fill="none" stroke="#9a8f98" strokeWidth="2" />
    <circle cx="211" cy="85" r="9" fill="#8c89c1" />
    <circle cx="80" cy="210" r="11" fill="#fbd893" />
    <circle cx="294" cy="261" r="5" fill="#f3a59c" />
  </svg>
);

const Blossom = () => (
  <svg width="63" height="63" viewBox="0 0 62 62">
    <defs>
      <radialGradient id="petal" gradientUnits="userSpaceOnUse" cx="31" cy="33" r="31">
        <stop offset="0" stopColor="#e85f90" /><stop offset=".4" stopColor="#fb94be" /><stop offset="1" stopColor="#fda9dc" />
      </radialGradient>
    </defs>
    {[0, 72, 144, 216, 288].map((a) => (
      <g key={a} transform={`rotate(${a} 31 32)`}>
        <path d="M31 32C20 25 15.5 14 18.5 6.5Q21 .6 27.5 .6L31 3L34.5 .6Q41 .6 43.5 6.5C46.5 14 42 25 31 32Z" fill="url(#petal)" stroke="#e884b5" strokeWidth=".5" />
        <path d="M31 30V16M31 30L26 20M31 30L36 20" stroke="#d1648d" strokeWidth=".8" />
        <circle cx="31" cy="15" r="1.2" fill="#8b2848" />
        <circle cx="25.5" cy="20" r="1" fill="#8b2848" />
      </g>
    ))}
    <circle cx="31" cy="32" r="6.5" fill="#eebd39" />
    <circle cx="30" cy="31" r="3.5" fill="#fbe26f" />
  </svg>
);

const WhiteHeart = () => (
  <svg width="60" height="59" viewBox="0 0 60 59">
    <defs>
      <linearGradient id="pearl" x1="0" y1="0" x2="0" y2="1">
        <stop offset="0" stopColor="#f4f4f4" /><stop offset=".25" stopColor="#dedede" /><stop offset="1" stopColor="#d6d6d6" />
      </linearGradient>
    </defs>
    <path d="M30 58.5C24 49 1 37 1 17C1 7 8 1 16 1C23 1 28 5 30 11C32 5 37 1 44 1C52 1 59 7 59 17C59 37 36 49 30 58.5Z" fill="url(#pearl)" />
  </svg>
);

const Crying = () => (
  <svg width="58" height="58" viewBox="0 0 58 58">
    <defs>
      <linearGradient id="face" x1="0" y1="0" x2="0" y2="1">
        <stop offset="0" stopColor="#fff06a" /><stop offset=".5" stopColor="#ffd42f" /><stop offset="1" stopColor="#f08e12" />
      </linearGradient>
      <linearGradient id="tear" x1="0" y1="0" x2="0" y2="1">
        <stop offset="0" stopColor="#4f9ae8" /><stop offset=".5" stopColor="#86c6f8" /><stop offset="1" stopColor="#3d8fe0" />
      </linearGradient>
    </defs>
    <circle cx="29" cy="29" r="28.5" fill="url(#face)" />
    <path d="M11.5 28H23V54.5Q23 58 18 56Q13 53 11.5 50ZM35 28H46.5V50Q45 53 40 56Q35 58 35 54.5Z" fill="url(#tear)" />
    <path d="M10 26.5Q17 22 24 27M34 27Q41 22 48 26.5" fill="none" stroke="#6b3708" strokeWidth="3" strokeLinecap="round" />
    <path d="M12 20.5Q17 19 19.5 15.5M46 20.5Q41 19 38.5 15.5" fill="none" stroke="#8a4d08" strokeWidth="2" strokeLinecap="round" />
    <path d="M29 34.5Q35 35.5 35 43Q34.5 50 29 50Q23.5 50 23 43Q23 35.5 29 34.5Z" fill="#7a3c0a" />
    <path d="M25 39.5Q29 33.5 33 39.5L32.5 43H25.5Z" fill="#fff" />
  </svg>
);

const TwoHearts = () => (
  <svg width="59" height="58" viewBox="0 0 59 58">
    <defs>
      <linearGradient id="pink" x1=".3" y1="0" x2=".5" y2="1">
        <stop offset="0" stopColor="#ff7cc6" /><stop offset=".35" stopColor="#f438a8" /><stop offset="1" stopColor="#e01488" />
      </linearGradient>
    </defs>
    <path d="M20 57.5C17 50 .5 42 .5 29C.5 22 5 18.5 10.5 18.5C15 18.5 18.5 21.5 20 25C21.5 21 25.5 18.5 30 18.5C36 18.5 40.5 23 40 30C39.5 42 24 50 20 57.5Z" fill="url(#pink)" />
    <path d="M46 25.5C43 20 33.5 17 33 8.5C33 3 36.5 .5 40 .5C43 .5 45 2.5 46 5C47.5 2 50 .5 53 1C57 1.5 59 5 58 10C56.5 17 49 20 46 25.5Z" fill="url(#pink)" />
  </svg>
);

const Ticks = () => (
  <svg width="46" height="30" viewBox="0 0 46 30" fill="none" stroke="#50bbf0" strokeWidth="4" strokeLinecap="round" strokeLinejoin="round">
    <path d="M2 19L10 27.5L30 2.5M20 24.5L22.5 27.5L44 2" />
  </svg>
);

const TailShape = ({ mine }) => (
  <Tail $mine={mine} viewBox="0 0 40 45">
    <path d="M20 0V8C20.5 26 27 38 37.5 43Q39 45 36 45C24 45 16 42 10 36L0 10Z" />
  </Tail>
);

const Time = ({ mine, children }) => (
  <Meta $mine={mine}><span>{children}</span>{mine && <Ticks />}</Meta>
);

export default function App() {
  return (
    <Screen>
      <Global />
      <Header>
        <Stroke w={37} h={62} sw={10.5}><path d="M31 6L6 31L31 56" /></Stroke>
        <Count>88</Count>
        <AvatarSlot><Avatar /></AvatarSlot>
        <Title>Rosa AI</Title>
        <HeaderAction $gap={0}>
          <Stroke w={78} h={54} sw={5.2}>
            <rect x="2.7" y="2.7" width="52" height="48.5" rx="9" />
            <path d="M55 21L68.5 9.5Q74.5 6 74.5 13V40Q74.5 47 68.5 43.5L55 33" />
          </Stroke>
        </HeaderAction>
        <HeaderAction $gap={73}>
          <Stroke w={62} h={62} sw={5}>
            <path d="M10 3Q14 1.5 16.5 5.5L23.5 15Q25.5 18 23 21L20 24Q17.5 27 19.5 30Q25 37.5 32 43Q35 45 37.5 43L40.5 40Q43.5 37.5 46.5 39.5L57 46.5Q60.5 49 59 52.5Q54.5 60 45.5 59.5Q34 58.5 17 40Q2.5 24 2.5 14Q3 6 10 3Z" />
          </Stroke>
        </HeaderAction>
      </Header>

      <Chat>
        <Wallpaper />
        <Messages>
          <DayPill>Today</DayPill>
          <Notice>
            <NoticeLine $lead $track={0.65}>
              <svg width="25" height="32" viewBox="0 0 25 32">
                <rect x="0" y="13" width="25" height="19" rx="4.5" fill="#ffd279" />
                <path d="M5 15V9.5a7.5 7.5 0 0 1 15 0V15" fill="none" stroke="#ffd279" strokeWidth="3.4" />
              </svg>
              Messages and calls are end-to-end
            </NoticeLine>
            <NoticeLine $track={0.78}>encrypted. Only people in this chat can</NoticeLine>
            <NoticeLine $track={0.82}>read, listen to, or share them. <b>Learn</b></NoticeLine>
            <NoticeLine><b>more</b></NoticeLine>
          </Notice>

          <Bubble $mine $width={782} $gap={40}>
            <Line $track={-0.4}>Am I messing this all up? I feel</Line>
            <Line $track={-0.4}>like I’m failing...<Time mine>1:45 PM</Time></Line>
            <TailShape mine />
          </Bubble>

          <Bubble $width={848} $gap={40}>
            <Line $track={-0.4}>
              Not at all<EmojiSlot $top={2} $before={18} $after={17}><Blossom /></EmojiSlot>Parenting feels
            </Line>
            <Line $track={-0.5}>overwhelming, but every cuddle,</Line>
            <Line $track={-0.5}>every try counts.<Time>1:45 PM</Time></Line>
          </Bubble>

          <Bubble $width={857} $gap={14}>
            <Line $track={-0.4}>Your baby doesn’t need “perfect”</Line>
            <Line $track={-0.4}><Dash>—</Dash> they just need you. And you’re</Line>
            <Line $track={-0.6}>
              exactly who they need<EmojiSlot $top={4} $before={18}><WhiteHeart /></EmojiSlot><Time>1:45 PM</Time>
            </Line>
            <TailShape />
          </Bubble>

          <Bubble $mine $width={854} $gap={40}>
            <Line $track={-0.4}>
              <EmojiSlot $top={4} $before={5} $after={6}><Crying /></EmojiSlot>That means so much<Time mine>1:45 PM</Time>
            </Line>
            <TailShape mine />
          </Bubble>

          <Bubble $width={800} $gap={40}>
            <Line $track={-0.35}>You’re doing beautifully. I’ll</Line>
            <Line $track={-0.45}>remind you of this anytime you</Line>
            <Line $track={-0.3}>
              forget<EmojiSlot $top={5} $before={19}><TwoHearts /></EmojiSlot><Time>1:46 PM</Time>
            </Line>
            <TailShape />
          </Bubble>
        </Messages>
      </Chat>

      <Composer>
        <ComposerIcon>
          <Stroke w={61} h={61} sw={5.6} dy={-2}><path d="M30.5 3V58M3 30.5H58" /></Stroke>
        </ComposerIcon>
        <Field>
          <Stroke w={58} h={58} sw={4.6} dy={-2}>
            <path d="M28 2.5C46 2.5 55 8 55 26V29C55 33 53.5 36 51 39L37 51.5C34 54.5 32 55.5 28 55.5C9 55.5 2.5 48 2.5 29C2.5 9 9 2.5 28 2.5Z" />
            <path d="M53 33H46Q31 33 31 48V54" />
          </Stroke>
        </Field>
        <ComposerIcon $gap={59}>
          <Stroke w={62} h={62} sw={5} dy={-2}>
            <circle cx="31" cy="31" r="28.3" />
            <path d="M21 16.5H41M21 25H41M28 16.5Q35 17 35 25Q34 33 23 33L32 47.5" strokeWidth="4.4" />
          </Stroke>
        </ComposerIcon>
        <ComposerIcon $gap={57}>
          <Stroke w={72} h={57} sw={4.8} dy={-2}>
            <path d="M7 10.5H19Q21.5 10.5 23 8L26 4Q27 2.5 29 2.5H42Q44 2.5 45 4L48 8Q49.5 10.5 52 10.5H63Q68.5 10.5 68.5 16V49Q68.5 54 63 54H8Q2.5 54 2.5 49V16Q2.5 10.5 7 10.5Z" />
            <circle cx="35.5" cy="31.5" r="13.8" />
            <circle cx="56" cy="20.5" r="1.3" fill="#fafafa" strokeWidth="4" />
          </Stroke>
        </ComposerIcon>
        <ComposerIcon $gap={56}>
          <Stroke w={50} h={71} sw={4.8} dy={-4}>
            <rect x="13.5" y="2.5" width="22" height="44" rx="11" />
            <path d="M2.5 37Q3 57.5 24.5 58.5Q46 57.5 46.5 37M24.5 58.5V68.5" />
          </Stroke>
        </ComposerIcon>
      </Composer>
    </Screen>
  );
}
